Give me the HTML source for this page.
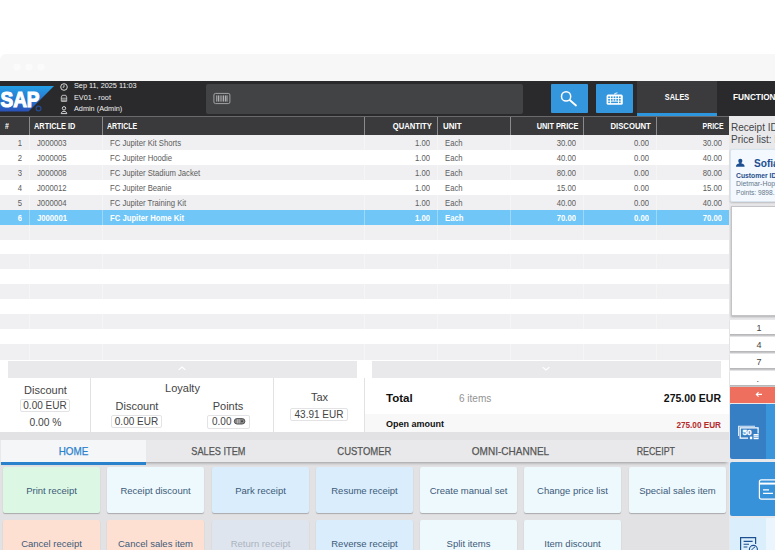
<!DOCTYPE html>
<html>
<head>
<meta charset="utf-8">
<title>POS</title>
<style>
html,body{margin:0;padding:0;}
body{width:775px;height:550px;overflow:hidden;background:#fff;position:relative;font-family:"Liberation Sans",sans-serif;color:#444;}
.abs{position:absolute;}
#band{left:0;top:53.5px;width:775px;height:28px;background:#f7f7f7;border-top-left-radius:6px;}
#hdr{left:0;top:81px;width:775px;height:35px;background:#2a2a2c;}
#inp{left:206px;top:83.5px;width:317px;height:30.5px;background:#414345;border-radius:2px;}
.hinfo{left:74px;font-size:7.3px;color:#f2f2f2;white-space:nowrap;line-height:8px;}
.btnb{top:84px;height:29px;width:37px;background:#3497dd;border-radius:1px;}
#tabsales{left:637px;top:81px;width:80px;height:32px;background:#3b3b3e;color:#fff;font-weight:bold;font-size:9px;text-align:center;line-height:32px;border-bottom:3px solid #2c97de;}
#tabfunc{left:717px;top:81px;width:58px;height:35px;color:#fff;font-weight:bold;font-size:9px;line-height:32px;white-space:nowrap;overflow:hidden;}
#thead{left:0;top:116px;width:729px;height:19px;background:#3a3a3c;border-top:1px solid #6a6a6c;box-sizing:border-box;}
.th{position:absolute;top:0;height:18px;line-height:18px;font-size:8.4px;font-weight:bold;color:#fff;white-space:nowrap;box-sizing:border-box;border-left:1px solid #8a8a8c;}
.th span{display:inline-block;transform:scaleX(.83);transform-origin:left center;}
.th.r{text-align:right;}
.th.r span{transform-origin:right center;}
.row{position:absolute;left:0;width:729px;height:15px;}
.row.odd{background:#f0f0f2;}
.row.sel{background:#70c6f7;font-weight:bold;}
.c{position:absolute;top:0;height:15px;line-height:17.6px;font-size:9px;white-space:nowrap;color:#5c5c5c;transform:scaleX(.855);transform-origin:left center;}
.c.r{transform-origin:right center;text-align:right;}
.row.sel .c{color:#fff;}
.vl{position:absolute;top:135px;width:1px;height:225px;background:rgba(255,255,255,.32);}
/* scroll band */
.sb{top:360.5px;height:17.5px;background:#e9e9eb;}
/* totals */
#tot{left:0;top:378px;width:729px;height:54.4px;background:#fff;}
.dv{top:378px;width:1px;height:54px;background:#e2e2e4;}
.lbl{font-size:11px;color:#444;white-space:nowrap;text-align:center;line-height:12px;}
.box{border:1px solid #e3e3e5;border-radius:2px;box-sizing:border-box;font-size:10px;color:#444;text-align:center;white-space:nowrap;background:#fff;}
/* right panel */
#rp{left:729px;top:116px;width:46px;height:434px;background:#e9e9ec;}
.key{left:730px;width:45px;height:14px;background:#fff;border-bottom:1px solid #b8b8ba;box-shadow:0 1px 1px rgba(0,0,0,.15);font-size:9px;color:#444;line-height:16px;}
.key span{position:absolute;left:26.5px;}
/* tabs */
#tabbg{left:0;top:432px;width:729px;height:118px;background:#e2e2e5;}
#tabbar{left:0;top:439.5px;width:729px;height:22.5px;background:#e9e9eb;box-shadow:0 3px 3px -2px rgba(0,0,0,.32);}
.tab{top:439px;height:23px;line-height:24px;font-size:11px;color:#555;text-align:center;white-space:nowrap;}
#btnarea{display:none;}
.fb{width:97px;height:45.8px;border-radius:2px;box-shadow:0 1px 1px rgba(0,0,0,.25);font-size:9.5px;color:#3d5a78;text-align:center;line-height:48px;white-space:nowrap;}

.sx{display:inline-block;transform:scaleX(.81);transform-origin:center;}
.tab span{display:inline-block;transform-origin:center;-webkit-text-stroke:0.25px currentColor;}

</style>
</head>
<body>
<div id="band" class="abs"></div>
<svg class="abs" style="left:8px;top:60px" width="44" height="14" viewBox="0 0 44 14"><circle cx="9" cy="7" r="3.6" fill="#fbfbfb"/><circle cx="21" cy="7" r="3.6" fill="#fbfbfb"/><circle cx="33" cy="7" r="3.6" fill="#fbfbfb"/></svg>
<div id="hdr" class="abs"></div>
<div id="inp" class="abs"></div>
<svg class="abs" style="left:0;top:85px" width="56" height="28" viewBox="0 0 56 28">
<defs><linearGradient id="sg" x1="0" y1="0" x2="0" y2="1"><stop offset="0" stop-color="#24a0e8"/><stop offset="1" stop-color="#2a52b8"/></linearGradient></defs>
<polygon points="0,1 54,1 28.5,26.5 0,26.5" fill="url(#sg)"/>
<text x="0.5" y="22" font-family="Liberation Sans, sans-serif" font-weight="bold" font-size="22" fill="#fff" stroke="#fff" stroke-width="1.2" textLength="39" lengthAdjust="spacingAndGlyphs">SAP</text>
<circle cx="38.5" cy="23.5" r="2.4" fill="none" stroke="#244c96" stroke-width="1.2"/>
</svg>
<!-- info icons -->
<svg class="abs" style="left:59px;top:82px" width="10" height="34" viewBox="0 0 10 34">
<circle cx="5" cy="5" r="3.3" fill="none" stroke="#e8e8e8" stroke-width="0.9"/>
<path d="M5 2.8V5.2H3.6" fill="none" stroke="#e8e8e8" stroke-width="0.8"/>
<path d="M2.3 15.3 L3.2 13.3 H6.8 L7.7 15.3 V19.3 H2.3 Z" fill="none" stroke="#e0e0e0" stroke-width="0.8"/>
<path d="M2.3 16.2H7.7M3.8 17.2V19.3M5 17.2V19.3M6.2 17.2V19.3" stroke="#e0e0e0" stroke-width="0.7" fill="none"/>
<circle cx="5" cy="26.3" r="1.7" fill="none" stroke="#e8e8e8" stroke-width="0.9"/>
<path d="M2.2 31.6 C2.2 28.6 7.8 28.6 7.8 31.6 Z" fill="none" stroke="#e8e8e8" stroke-width="0.9"/>
</svg>
<div class="abs hinfo" style="top:82px">Sep 11, 2025 11:03</div>
<div class="abs hinfo" style="top:93.6px">EV01 - root</div>
<div class="abs hinfo" style="top:105.4px">Admin (Admin)</div>
<!-- barcode icon -->
<svg class="abs" style="left:212px;top:91px" width="20" height="15" viewBox="0 0 20 15">
<rect x="1.9" y="2.4" width="16" height="10.2" rx="1.6" fill="none" stroke="#a2a2a4" stroke-width="1"/>
<path d="M4.8 4.4V10.6M6.6 4.4V10.6M9 4.4V10.6M11.6 4.4V10.6M13.4 4.4V10.6M15 4.4V10.6" stroke="#c8c8ca" stroke-width="0.9"/>
<path d="M7.8 4.4V10.6M10.4 4.4V10.6" stroke="#88888a" stroke-width="0.6"/>
</svg>
<div class="abs btnb" style="left:551px"></div>
<div class="abs btnb" style="left:596px"></div>
<svg class="abs" style="left:551px;top:84px" width="37" height="29" viewBox="0 0 37 29">
<circle cx="15.1" cy="12.4" r="4.6" fill="none" stroke="#fff" stroke-width="1.5"/>
<path d="M18.7 16 L25 21.5" stroke="#fff" stroke-width="1.8" stroke-linecap="round"/>
</svg>
<svg class="abs" style="left:596px;top:84px" width="37" height="29" viewBox="0 0 37 29">
<rect x="10.6" y="10.6" width="16.2" height="10.2" rx="1.6" fill="#fff"/>
<g fill="#3497dd">
<rect x="12.2" y="12.4" width="1.7" height="1.7"/><rect x="14.9" y="12.4" width="1.7" height="1.7"/><rect x="17.6" y="12.4" width="1.7" height="1.7"/><rect x="20.3" y="12.4" width="1.7" height="1.7"/><rect x="23" y="12.4" width="1.7" height="1.7"/>
<rect x="12.2" y="15" width="1.7" height="1.7"/><rect x="14.9" y="15" width="1.7" height="1.7"/><rect x="17.6" y="15" width="1.7" height="1.7"/><rect x="20.3" y="15" width="1.7" height="1.7"/><rect x="23" y="15" width="1.7" height="1.7"/>
<rect x="12.2" y="17.6" width="1.7" height="1.5"/><rect x="14.9" y="17.6" width="7.1" height="1.5"/><rect x="23" y="17.6" width="1.7" height="1.5"/>
</g>
<path d="M18.7 10.6 V9.6 L21.4 8.8" fill="none" stroke="#fff" stroke-width="0.9"/>
</svg>
<div id="tabsales" class="abs"><span class="sx">SALES</span></div>
<div id="tabfunc" class="abs"><span class="sx" style="margin-left:16px;transform-origin:left center;transform:scaleX(.915)">FUNCTIONS</span></div>
<div id="thead" class="abs">
<div class="th" style="left:0;width:29px;border-left:none;padding-left:5px"><span>#</span></div>
<div class="th" style="left:29px;width:73px;padding-left:4px"><span style="transform:scaleX(0.879)">ARTICLE ID</span></div>
<div class="th" style="left:102px;width:262px;padding-left:4px"><span style="transform:scaleX(0.832)">ARTICLE</span></div>
<div class="th r" style="left:364px;width:73px;padding-right:5px"><span style="transform:scaleX(0.911)">QUANTITY</span></div>
<div class="th" style="left:437px;width:73px;padding-left:5px"><span style="transform:scaleX(0.951)">UNIT</span></div>
<div class="th r" style="left:510px;width:73px;padding-right:5px"><span style="transform:scaleX(0.88)">UNIT PRICE</span></div>
<div class="th r" style="left:583px;width:73px;padding-right:5px"><span style="transform:scaleX(0.921)">DISCOUNT</span></div>
<div class="th r" style="left:656px;width:73px;padding-right:5.5px"><span style="transform:scaleX(0.82)">PRICE</span></div>
</div>
<div class="row odd" style="top:135.0px"><span class="c r" style="left:0;width:22px">1</span><span class="c" style="left:37px">J000003</span><span class="c" style="left:110px">FC Jupiter Kit Shorts</span><span class="c r" style="left:364px;width:66px">1.00</span><span class="c" style="left:445px">Each</span><span class="c r" style="left:510px;width:66px">30.00</span><span class="c r" style="left:583px;width:66px">0.00</span><span class="c r" style="left:656px;width:66px">30.00</span></div>
<div class="row" style="top:149.93px"><span class="c r" style="left:0;width:22px">2</span><span class="c" style="left:37px">J000005</span><span class="c" style="left:110px">FC Jupiter Hoodie</span><span class="c r" style="left:364px;width:66px">1.00</span><span class="c" style="left:445px">Each</span><span class="c r" style="left:510px;width:66px">40.00</span><span class="c r" style="left:583px;width:66px">0.00</span><span class="c r" style="left:656px;width:66px">40.00</span></div>
<div class="row odd" style="top:164.86px"><span class="c r" style="left:0;width:22px">3</span><span class="c" style="left:37px">J000008</span><span class="c" style="left:110px">FC Jupiter Stadium Jacket</span><span class="c r" style="left:364px;width:66px">1.00</span><span class="c" style="left:445px">Each</span><span class="c r" style="left:510px;width:66px">80.00</span><span class="c r" style="left:583px;width:66px">0.00</span><span class="c r" style="left:656px;width:66px">80.00</span></div>
<div class="row" style="top:179.79px"><span class="c r" style="left:0;width:22px">4</span><span class="c" style="left:37px">J000012</span><span class="c" style="left:110px">FC Jupiter Beanie</span><span class="c r" style="left:364px;width:66px">1.00</span><span class="c" style="left:445px">Each</span><span class="c r" style="left:510px;width:66px">15.00</span><span class="c r" style="left:583px;width:66px">0.00</span><span class="c r" style="left:656px;width:66px">15.00</span></div>
<div class="row odd" style="top:194.72px"><span class="c r" style="left:0;width:22px">5</span><span class="c" style="left:37px">J000004</span><span class="c" style="left:110px">FC Jupiter Training Kit</span><span class="c r" style="left:364px;width:66px">1.00</span><span class="c" style="left:445px">Each</span><span class="c r" style="left:510px;width:66px">40.00</span><span class="c r" style="left:583px;width:66px">0.00</span><span class="c r" style="left:656px;width:66px">40.00</span></div>
<div class="row sel" style="top:209.65px"><span class="c r" style="left:0;width:22px">6</span><span class="c" style="left:37px">J000001</span><span class="c" style="left:110px">FC Jupiter Home Kit</span><span class="c r" style="left:364px;width:66px">1.00</span><span class="c" style="left:445px">Each</span><span class="c r" style="left:510px;width:66px">70.00</span><span class="c r" style="left:583px;width:66px">0.00</span><span class="c r" style="left:656px;width:66px">70.00</span></div>
<div class="row odd" style="top:224.58px"></div>
<div class="row" style="top:239.51px"></div>
<div class="row odd" style="top:254.44px"></div>
<div class="row" style="top:269.37px"></div>
<div class="row odd" style="top:284.3px"></div>
<div class="row" style="top:299.23px"></div>
<div class="row odd" style="top:314.16px"></div>
<div class="row" style="top:329.09px"></div>
<div class="row odd" style="top:344.02px;height:15.8px"></div>
<div class="vl" style="left:29px"></div>
<div class="vl" style="left:102px"></div>
<div class="vl" style="left:364px"></div>
<div class="vl" style="left:437px"></div>
<div class="vl" style="left:510px"></div>
<div class="vl" style="left:583px"></div>
<div class="vl" style="left:656px"></div>
<div class="abs sb" style="left:8px;width:349px"></div>
<div class="abs sb" style="left:372px;width:349px"></div>
<svg class="abs" style="left:176px;top:364px" width="12" height="8" viewBox="0 0 12 8"><path d="M2.6 5.8L6 3L9.4 5.8" fill="none" stroke="#fff" stroke-width="1.1"/></svg>
<svg class="abs" style="left:540px;top:365px" width="12" height="8" viewBox="0 0 12 8"><path d="M2.6 2.2L6 5L9.4 2.2" fill="none" stroke="#fff" stroke-width="1.1"/></svg>
<div id="tabbg" class="abs"></div>
<div id="tot" class="abs"></div>
<div class="abs" style="left:364px;top:414px;width:365px;height:18px;background:#f8f8f9"></div>
<div class="abs dv" style="left:90px"></div>
<div class="abs dv" style="left:273px"></div>
<div class="abs dv" style="left:364px"></div>
<div class="abs lbl" style="left:0;width:91px;top:384px">Discount</div>
<div class="abs box" style="left:20px;top:399px;width:50px;height:13px;line-height:12px">0.00 EUR</div>
<div class="abs lbl" style="left:0;width:91px;top:416.8px;font-size:10.3px">0.00 %</div>
<div class="abs lbl" style="left:91px;width:183px;top:382px">Loyalty</div>
<div class="abs lbl" style="left:91px;width:92px;top:400px">Discount</div>
<div class="abs box" style="left:111px;top:415px;width:51px;height:13px;line-height:12px">0.00 EUR</div>
<div class="abs lbl" style="left:182px;width:92px;top:400px">Points</div>
<div class="abs box" style="left:207px;top:415px;width:43px;height:14px;line-height:12px;text-align:left;padding-left:4px">0.00</div>
<svg class="abs" style="left:233px;top:417px" width="14" height="9" viewBox="0 0 14 9"><rect x="1.3" y="1.6" width="10.6" height="5.4" rx="2.7" fill="#8a8a8c" stroke="#555" stroke-width="1"/><path d="M4.5 2.2V6.4M6.2 2.2V6.4" stroke="#c8c8c8" stroke-width="0.7"/><circle cx="9" cy="4.3" r="1" fill="#444"/></svg>
<div class="abs lbl" style="left:274px;width:91px;top:391px">Tax</div>
<div class="abs box" style="left:290px;top:408px;width:58px;height:13px;line-height:12px">43.91 EUR</div>
<div class="abs" style="left:386px;top:392px;font-size:11.5px;font-weight:bold;color:#111;line-height:13px">Total</div>
<div class="abs" style="left:459px;top:393px;font-size:10px;color:#939393;line-height:12px">6 items</div>
<div class="abs" style="right:54px;top:392.2px;font-size:10.5px;font-weight:bold;color:#111;line-height:13px;white-space:nowrap">275.00 EUR</div>
<div class="abs" style="left:386px;top:419px;font-size:9px;font-weight:bold;color:#111;line-height:10px;white-space:nowrap">Open amount</div>
<div class="abs" style="right:54px;top:421px;font-size:8.2px;font-weight:bold;color:#b52b2b;line-height:10px;white-space:nowrap">275.00 EUR</div>

<div id="tabbar" class="abs"></div>
<div class="abs" style="left:1px;top:439.5px;width:145px;height:22px;background:#f5f6f8;border-bottom:3.3px solid #2b82cc"></div>
<div class="abs tab" style="left:1px;width:145px;color:#2b82cc"><span style="transform:scaleX(0.897)">HOME</span></div>
<div class="abs tab" style="left:146px;width:145px"><span style="transform:scaleX(0.836)">SALES ITEM</span></div>
<div class="abs tab" style="left:292px;width:145px"><span style="transform:scaleX(0.862)">CUSTOMER</span></div>
<div class="abs tab" style="left:437px;width:146px"><span style="transform:scaleX(0.91)">OMNI-CHANNEL</span></div>
<div class="abs tab" style="left:583px;width:145px"><span style="transform:scaleX(0.803)">RECEIPT</span></div>
<div id="btnarea" class="abs"></div>
<div class="abs fb" style="left:3px;top:467.4px;background:#dcf8e4">Print receipt</div>
<div class="abs fb" style="left:107px;top:467.4px;background:#eef9fe">Receipt discount</div>
<div class="abs fb" style="left:212px;top:467.4px;background:#d9edfc">Park receipt</div>
<div class="abs fb" style="left:316px;top:467.4px;background:#d9edfc">Resume receipt</div>
<div class="abs fb" style="left:420px;top:467.4px;background:#eef9fe">Create manual set</div>
<div class="abs fb" style="left:524px;top:467.4px;background:#eef9fe">Change price list</div>
<div class="abs fb" style="left:629px;top:467.4px;background:#eef9fe">Special sales item</div>
<div class="abs fb" style="left:3px;top:520.4px;background:#fde0d2">Cancel receipt</div>
<div class="abs fb" style="left:107px;top:520.4px;background:#fde0d2">Cancel sales item</div>
<div class="abs fb" style="left:212px;top:520.4px;background:#dfe5ee;color:#aab4c0">Return receipt</div>
<div class="abs fb" style="left:316px;top:520.4px;background:#d9edfc">Reverse receipt</div>
<div class="abs fb" style="left:420px;top:520.4px;background:#eef9fe">Split items</div>
<div class="abs fb" style="left:524px;top:520.4px;background:#eef9fe">Item discount</div>

<div id="rp" class="abs"></div>
<div class="abs" style="left:731px;top:121.5px;font-size:10px;line-height:12px;color:#444;white-space:nowrap">Receipt ID</div>
<div class="abs" style="left:731px;top:134.3px;font-size:10px;line-height:12px;color:#444;white-space:nowrap">Price list: I</div>
<div class="abs" style="left:730.4px;top:148.8px;width:50px;height:52.8px;background:#f3f9fe;border:1px solid #d8e4ee;box-sizing:border-box;border-radius:2px;box-shadow:0 1px 2px rgba(0,0,0,.2)"></div>
<div class="abs" style="left:754px;top:156.5px;font-size:11px;font-weight:bold;color:#1d4f91;line-height:13px;white-space:nowrap;transform:scaleX(.92);transform-origin:left center">Sofia</div>
<svg class="abs" style="left:735px;top:158px" width="11" height="10" viewBox="0 0 11 10"><circle cx="5.3" cy="2.9" r="2.1" fill="#1d4f91"/><path d="M1 8.7 C1 5.6 3.4 5.4 5.3 5.4 C7.2 5.4 9.6 5.6 9.6 8.7 Z" fill="#1d4f91"/><rect x="4.2" y="4" width="2.2" height="2.4" fill="#1d4f91"/></svg>
<div class="abs" style="left:736px;top:172px;font-size:6.8px;font-weight:bold;color:#284f8c;line-height:8px;white-space:nowrap">Customer ID</div>
<div class="abs" style="left:736px;top:180.3px;font-size:6.9px;color:#66788c;line-height:8px;white-space:nowrap">Dietmar-Hop</div>
<div class="abs" style="left:736px;top:189px;font-size:6.6px;color:#66788c;line-height:8px;white-space:nowrap">Points: 9898.</div>
<div class="abs" style="left:730.5px;top:205.5px;width:50px;height:110px;background:#fff;border:1px solid #c4c4c6;box-sizing:border-box;box-shadow:0 1px 2px rgba(0,0,0,.25)"></div>
<div class="abs key" style="top:319.5px"><span>1</span></div>
<div class="abs key" style="top:336.7px"><span>4</span></div>
<div class="abs key" style="top:354px"><span>7</span></div>
<div class="abs key" style="top:371.3px"><span>.</span></div>
<div class="abs" style="left:730px;top:387px;width:45px;height:16px;background:#ee6f5e;color:#fff;font-size:8px;line-height:15px"><svg style="position:absolute;left:25px;top:4px" width="8" height="7" viewBox="0 0 8 7"><path d="M7 3.4H1.6M3.6 1.2L1.3 3.4L3.6 5.6" fill="none" stroke="#fff" stroke-width="1.1"/></svg></div>
<div class="abs" style="left:730px;top:404px;width:36px;height:55px;background:#377fc5;border-radius:1px 0 0 2px"></div>
<div class="abs" style="left:766px;top:404px;width:9px;height:55px;background:#3a95db"></div>
<div class="abs" style="left:730px;top:462px;width:45px;height:54px;background:#3892da;border-radius:2px 0 0 2px"></div>
<div class="abs" style="left:730px;top:517.5px;width:36px;height:33px;background:#dbeefc"></div>
<div class="abs" style="left:766px;top:517.5px;width:9px;height:33px;background:#eaf5fd"></div>

<svg class="abs" style="left:736px;top:424px" width="26" height="18" viewBox="0 0 26 18">
<path d="M2.6 12V2.2H19" fill="none" stroke="#e4eefa" stroke-width="1.1"/>
<path d="M12 14.2H4.2V3.8H22.1V9.4" fill="none" stroke="#fff" stroke-width="1.2"/>
<text x="6.4" y="11.2" font-family="Liberation Sans, sans-serif" font-weight="bold" font-size="7.6" fill="#fff" stroke="#fff" stroke-width="0.3" textLength="9.2" lengthAdjust="spacingAndGlyphs">50</text>
<rect x="17.6" y="10" width="5" height="5.2" fill="#fff"/>
<path d="M17.6 11.8H22.6M17.6 13.5H22.6" stroke="#3a80c4" stroke-width="0.6"/>
<rect x="13.9" y="12.6" width="2.3" height="2.6" fill="#fff"/>
</svg>
<svg class="abs" style="left:757px;top:477px" width="18" height="25" viewBox="0 0 18 25">
<rect x="2.4" y="2.8" width="22" height="19.4" rx="2" fill="none" stroke="#fff" stroke-width="1.2"/>
<path d="M2.4 6.6H18" stroke="#fff" stroke-width="2"/>
<path d="M6 12.8H12M6 16.3H16" stroke="#fff" stroke-width="1.2"/>
</svg>
<svg class="abs" style="left:738px;top:535px" width="24" height="15" viewBox="0 0 24 15">
<path d="M2.6 15V2.6H17.6V9" fill="none" stroke="#1d4f91" stroke-width="1.2"/>
<path d="M5.6 6.4H14.6M5.6 9.2H11M5.6 12H9.4" stroke="#1d4f91" stroke-width="1.1"/>
<circle cx="15.4" cy="14.4" r="4" fill="#dbeefc" stroke="#1d4f91" stroke-width="1.1"/>
<path d="M13.6 15L15.2 13.2L17.2 11.8" stroke="#1d4f91" stroke-width="1" fill="none"/>
</svg>
</body>
</html>
